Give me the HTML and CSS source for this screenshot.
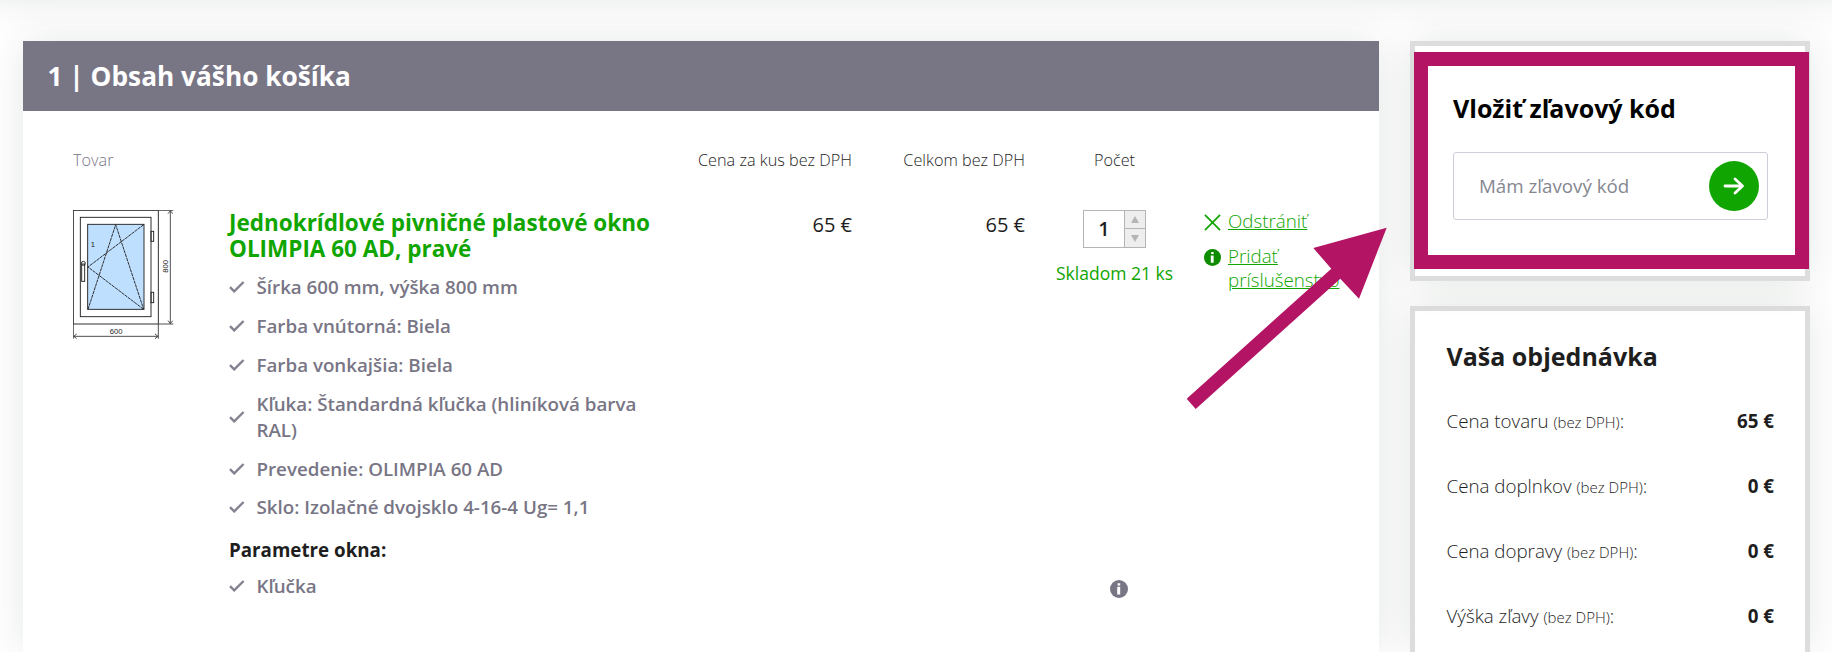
FILE: index.html
```html
<!DOCTYPE html>
<html lang="sk">

<head>
  <meta charset="UTF-8">
  <meta name="viewport" content="width=device-width, initial-scale=1.0">
  <title>Nákupný košík</title>
  <link rel="stylesheet" href="styles.css">
</head>

<body>

  <!-- Shared icons -->
  <svg class="icon-defs" width="0" height="0">
    <symbol id="icon-check" viewBox="0 0 16 12">
      <path d="M1 6.2 L5.2 10.4 L14.6 1" fill="none" stroke="currentColor" stroke-width="2.4" />
    </symbol>
    <symbol id="icon-info" viewBox="0 0 18 18">
      <circle cx="9" cy="9" r="9" fill="currentColor" />
      <path d="M7.6 3.2h2.6v2.2H7.6zM7.2 6.8h3v7.8H7.2z" fill="#fff" />
    </symbol>
  </svg>

  <!-- Bottom edge of the site header -->
  <header class="site-header"></header>

  <div class="container">
    <!-- Cart -->
    <main class="cart">
      <h1>1 | Obsah vášho košíka</h1>

      <div class="cart-grid cart-head">
        <div class="muted">Tovar</div>
        <div></div>
        <div class="price">Cena za kus bez DPH</div>
        <div class="price">Celkom bez DPH</div>
        <div class="count">Počet</div>
        <div></div>
      </div>

      <div class="cart-grid cart-item">
        <svg class="product-image" viewBox="69 60 303 390">
          <g fill="none" stroke="#222" stroke-width="2.8">
            <rect x="70" y="61" width="255" height="341" />
            <rect x="91" y="82" width="212" height="298" />
            <rect x="113" y="103" width="169" height="255" fill="#bfdfff" />
            <rect x="303" y="124" width="8" height="30" />
            <rect x="303" y="307" width="8" height="31" />
            <rect x="95" y="222" width="9" height="52" />
            <circle cx="100" cy="220" r="6" />
          </g>
          <g fill="none" stroke="#222" stroke-width="2.8">
            <path d="M114 358 L197 104 L281 358" stroke-dasharray="10 2" />
            <path d="M281 104 L114 231 L281 358" stroke-dasharray="10 2" />
          </g>
          <g fill="none" stroke="#444" stroke-width="2.8">
            <path d="M325 61 H370 M325 402 H370 M361 62 V401" />
            <path d="M70 402 V446 M325 402 V446 M71 439 H324" />
            <path d="M354 71 L361 62 L368 71 M354 392 L361 401 L368 392" />
            <path d="M80 432 L71 439 L80 446 M315 432 L324 439 L315 446" />
          </g>
          <text x="122" y="170">1</text>
          <text x="179" y="432">600</text>
          <text transform="translate(354 248) rotate(-90)">800</text>
        </svg>

        <div class="product">
          <h2><a href="#">Jednokrídlové pivničné plastové okno OLIMPIA 60 AD, pravé</a></h2>
          <ul>
            <li><svg class="check"><use href="#icon-check" /></svg>Šírka 600 mm, výška 800 mm</li>
            <li><svg class="check"><use href="#icon-check" /></svg>Farba vnútorná: Biela</li>
            <li><svg class="check"><use href="#icon-check" /></svg>Farba vonkajšia: Biela</li>
            <li><svg class="check"><use href="#icon-check" /></svg>Kľuka: Štandardná kľučka (hliníková barva RAL)</li>
            <li><svg class="check"><use href="#icon-check" /></svg>Prevedenie: OLIMPIA 60 AD</li>
            <li><svg class="check"><use href="#icon-check" /></svg>Sklo: Izolačné dvojsklo 4-16-4 Ug= 1,1</li>
          </ul>
          <h3>Parametre okna:</h3>
        </div>

        <div class="price">65 €</div>
        <div class="price">65 €</div>

        <div class="count">
          <div class="stepper">
            <span class="value">1</span>
            <button type="button" class="up" aria-label="Pridať kus"></button>
            <button type="button" class="down" aria-label="Odobrať kus"></button>
          </div>
          <div class="stock">Skladom 21 ks</div>
        </div>

        <div class="actions">
          <a href="#">
            <svg viewBox="0 0 18 18"><path d="M1 1 L17 17 M17 1 L1 17" stroke="#10a500" stroke-width="1.8" /></svg>
            <span>Odstrániť</span>
          </a>
          <a href="#">
            <svg class="info-green"><use href="#icon-info" /></svg>
            <span>Pridať príslušenstvo</span>
          </a>
        </div>
      </div>

      <div class="cart-grid cart-param">
        <div></div>
        <ul>
          <li><svg class="check"><use href="#icon-check" /></svg>Kľučka</li>
        </ul>
        <div></div>
        <div></div>
        <div class="count"><svg class="info-gray"><use href="#icon-info" /></svg></div>
      </div>
    </main>

    <!-- Sidebar -->
    <aside>
      <section class="box discount">
        <h2>Vložiť zľavový kód</h2>
        <form class="code-form">
          <input type="text" placeholder="Mám zľavový kód">
          <button type="submit" aria-label="Použiť kód">
            <svg viewBox="0 0 22 18"><path d="M2 9 H19 M12 2 L19.5 9 L12 16" fill="none" stroke="#fff" stroke-width="2.8" stroke-linecap="round" stroke-linejoin="round" /></svg>
          </button>
        </form>
        <div class="highlight"></div>
      </section>

      <section class="box order">
        <h2>Vaša objednávka</h2>
        <dl>
          <dt>Cena tovaru <small>(bez DPH)</small>:</dt><dd>65 €</dd>
          <dt>Cena doplnkov <small>(bez DPH)</small>:</dt><dd>0 €</dd>
          <dt>Cena dopravy <small>(bez DPH)</small>:</dt><dd>0 €</dd>
          <dt>Výška zľavy <small>(bez DPH)</small>:</dt><dd>0 €</dd>
        </dl>
      </section>
    </aside>
  </div>

  <!-- Arrow pointing at the discount box -->
  <svg class="arrow" viewBox="0 0 201 182">
    <path d="M0.7 171.7 L9.7 182 L154.3 51.7 L173 71.7 L200.7 0.7 L127.3 21 L145.3 41.7 Z" fill="#b31464" />
  </svg>

</body>

</html>
```
FILE: styles.css
```css
/* Global Styling */
* {
  box-sizing: border-box;
}

body {
  font-family: "Open Sans", "Noto Sans", sans-serif;
  font-size: 18.75px;
  line-height: 1.4;
  margin: 0;
  height: 652px;
  overflow: hidden;
  position: relative;
  background-color: #fff;
  color: #1e1e1e;
}

h1, h2, h3, ul, dl, dd {
  margin: 0;
  padding: 0;
}

ul {
  list-style: none;
}

a {
  color: #10a500;
}

.icon-defs {
  display: block;
}

.site-header {
  height: 0;
  margin: 0 22px 0 23px;
  box-shadow: 0 -40px 38px 40px rgba(0, 50, 25, 0.11);
}

/* Page Layout */
.container {
  display: flex;
  align-items: flex-start;
  gap: 31px;
  padding: 41px 22px 0 23px;
}

/* Cart */
.cart {
  width: 1356px;
  height: 611px;
  background-color: #fff;
  box-shadow: 0 0 38px rgba(0, 50, 25, 0.11);
}

.cart h1 {
  height: 70px;
  padding-left: 24.5px;
  background-color: #787585;
  color: #fff;
  font-size: 26.25px;
  line-height: 70px;
}

.cart-grid {
  display: grid;
  grid-template-columns: 156px 427px 196px 173px 179px 145px;
  padding-left: 50px;
}

.cart-head {
  padding-top: 37px;
  font-size: 16.25px;
  font-weight: 300;
  line-height: 24px;
}

.muted {
  color: #787585;
}

.price {
  text-align: right;
}

.count {
  text-align: center;
}

.cart-item {
  padding-top: 38px;
}

.cart-item > .price {
  padding-top: 1px;
  font-size: 20px;
}

.product-image {
  width: 101px;
  height: 130px;
}

.product-image text {
  font-family: "Liberation Sans", Arial, sans-serif;
  font-size: 23px;
  fill: #222;
}

/* Product description */
.product h2 {
  font-size: 22.5px;
  line-height: 26px;
  margin-bottom: 12.3px;
}

.product h2 a {
  text-decoration: none;
}

.cart li {
  display: flex;
  align-items: center;
  gap: 11.5px;
  margin-bottom: 12.5px;
  color: #787585;
  font-weight: 600;
}

.check {
  flex: none;
  width: 16px;
  height: 12px;
  opacity: 0.9;
}

.product h3 {
  padding-top: 4px;
  font-size: 18.75px;
}

.cart-param {
  padding-top: 9.7px;
}

/* Quantity */
.stepper {
  display: grid;
  grid-template: 17px 19px / 40px 21px;
  width: 63px;
  height: 38px;
  margin-left: 27px;
  border: 1px solid #b4b4b4;
}

.stepper .value {
  grid-row: 1 / 3;
  font-size: 20px;
  font-weight: 600;
  line-height: 36px;
}

.stepper button {
  display: flex;
  align-items: center;
  justify-content: center;
  padding: 0;
  border: 0;
  border-left: 1px solid #b4b4b4;
  background-color: #eee;
}

.stepper .down {
  border-top: 1px solid #b4b4b4;
}

.stepper button::before {
  content: "";
  border: 4px solid transparent;
  border-top-width: 0;
  border-bottom: 7px solid #b4b4b4;
}

.stepper .down::before {
  border-top: 7px solid #b4b4b4;
  border-bottom-width: 0;
}

.stock {
  margin-top: 13px;
  color: #10a500;
  font-size: 17.5px;
  white-space: nowrap;
}

.cart-grid > .count {
  margin-left: 31px;
  width: 117px;
}

/* Item actions */
.actions {
  display: flex;
  flex-direction: column;
  gap: 12px;
  margin-top: -1px;
  font-weight: 300;
  line-height: 23.4px;
}

.actions a {
  display: flex;
  gap: 7px;
}

.actions a svg {
  flex: none;
  width: 17px;
  height: 17px;
  margin-top: 5px;
}

.actions .info-green {
  color: #0d8c00;
}

.info-gray {
  display: inline-block;
  width: 18px;
  height: 18px;
  margin: 7px 0 0 9px;
  color: #787585;
}

/* Sidebar */
aside {
  display: flex;
  flex-direction: column;
  gap: 25px;
  width: 400px;
}

.box {
  border: 5px solid #ddd;
  background-color: #fff;
  box-shadow: 0 0 38px rgba(0, 50, 25, 0.11);
}

.box h2 {
  font-size: 25px;
  line-height: 34px;
}

.discount {
  position: relative;
  height: 240px;
  padding: 45px 37px 0 38px;
}

.discount h2 {
  color: #000;
}

.code-form {
  display: flex;
  align-items: center;
  width: 315px;
  height: 68px;
  margin-top: 27px;
  padding: 0 8px 0 25px;
  border: 1px solid #cfcdd8;
  border-radius: 3px;
}

.code-form input {
  flex: 1;
  min-width: 0;
  padding: 0;
  border: 0;
  font: inherit;
}

.code-form input::placeholder {
  color: #858790;
}

.code-form button {
  display: flex;
  align-items: center;
  justify-content: center;
  width: 50px;
  height: 50px;
  border: 0;
  border-radius: 50%;
  background-color: #10a500;
}

.code-form svg {
  flex: none;
  width: 22px;
  height: 18px;
}

/* Frame laid over the discount box */
.highlight {
  position: absolute;
  top: 6px;
  left: -1px;
  width: 395px;
  height: 217px;
  border: 14px solid #b31464;
}

.order {
  height: 346px;
  padding: 28px 31px 0 31.5px;
  border-bottom: 0;
}

.order dl {
  display: grid;
  grid-template-columns: 1fr auto;
  grid-auto-rows: 65px;
  margin-top: 15px;
  line-height: 65px;
}

.order dt {
  font-weight: 300;
}

.order small {
  font-size: 15px;
}

.order dd {
  font-weight: 700;
  text-align: right;
}

.arrow {
  position: absolute;
  top: 227px;
  left: 1186px;
  width: 201px;
  height: 182px;
}
```
